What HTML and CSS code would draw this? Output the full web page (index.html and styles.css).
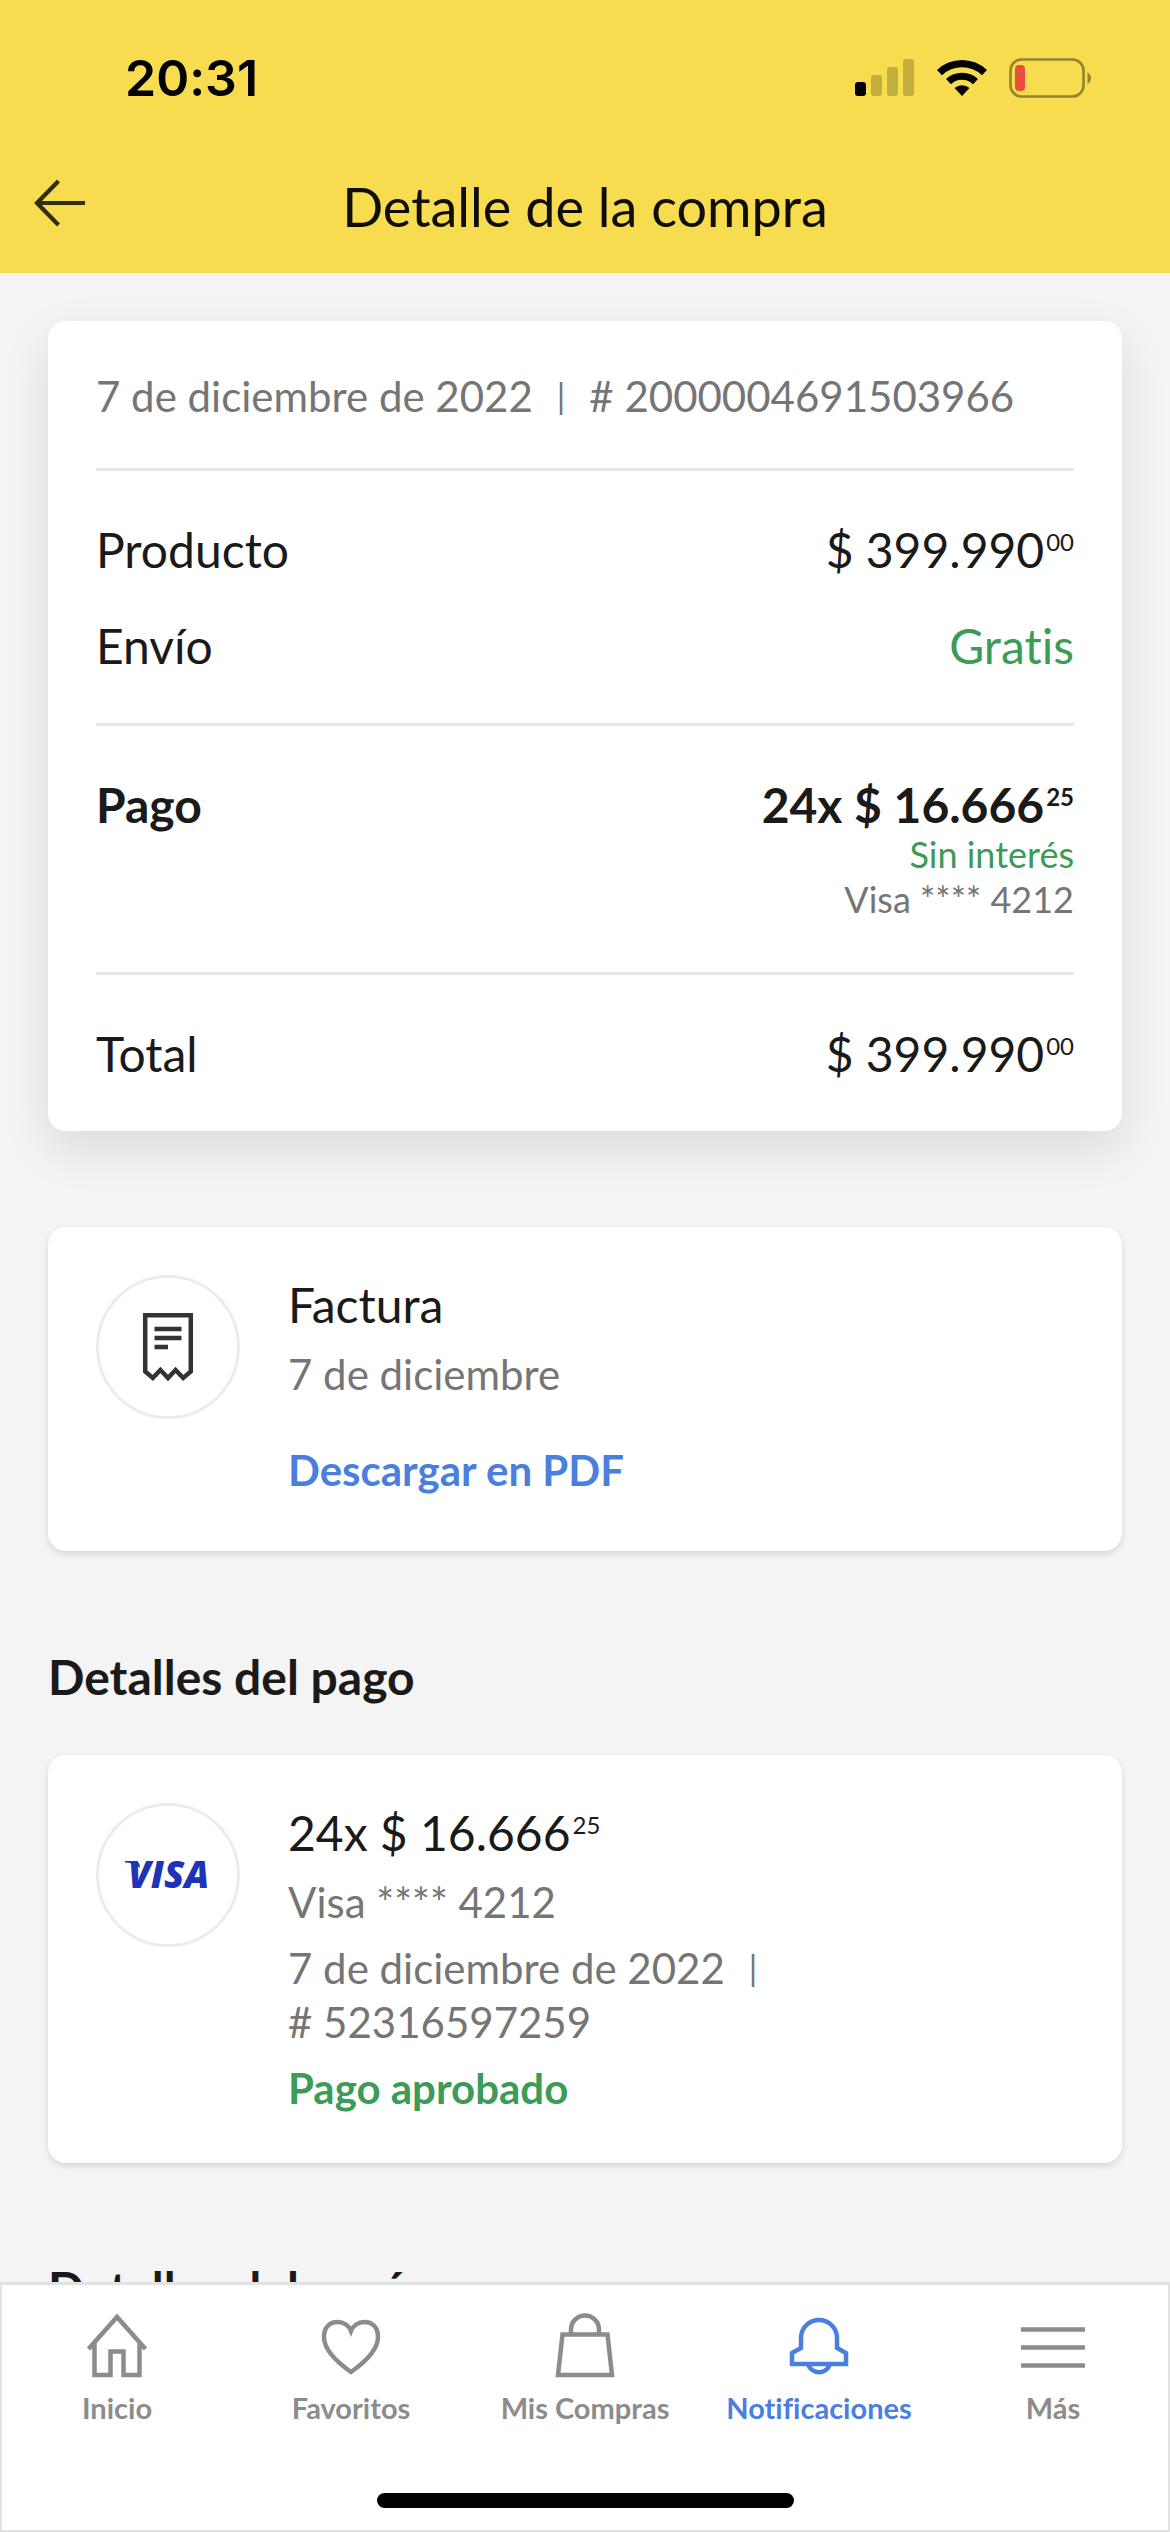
FILE: index.html
```html
<!DOCTYPE html>
<html lang="es">
<head>
<meta charset="utf-8">
<meta name="viewport" content="width=device-width, initial-scale=1">
<title>Detalle de la compra</title>
<link rel="stylesheet" href="styles.css">
</head>
<body>
<header class="header">
  <div class="status">
    <span class="status-time">20:31</span>
    <div class="status-icons">
      <svg class="signal" width="60" height="40" viewBox="0 0 60 40" aria-hidden="true">
        <rect x="0" y="24" width="11" height="14" rx="3"/>
        <g opacity=".2">
          <rect x="16" y="17" width="11" height="21" rx="3"/>
          <rect x="32" y="9" width="11" height="29" rx="3"/>
          <rect x="48" y="1" width="11" height="37" rx="3"/>
        </g>
      </svg>
      <svg class="wifi" width="52" height="40" viewBox="0 0 52 40" aria-hidden="true">
        <path d="M1 12A36 36 0 0 1 51 12L46 17.200A29 29 0 0 0 6 17.200ZM10 21A23.500 23.500 0 0 1 42 21L37 26.200A16 16 0 0 0 15 26.200ZM18.500 30A12 12 0 0 1 33.500 30L26 38Z"/>
      </svg>
      <svg class="battery" width="84" height="40" viewBox="0 0 84 40" aria-hidden="true">
        <rect x="1.500" y="1.500" width="73" height="37" rx="11" fill="none" stroke="#94842f" stroke-width="2.600"/>
        <path d="M78.500 14.500Q82 16.500 82 20T78.500 26Z" fill="#94842f"/>
        <rect x="6" y="7" width="10" height="26" rx="4" fill="#eb4d3d"/>
      </svg>
    </div>
  </div>
  <div class="titlebar">
    <button class="back" type="button" aria-label="Volver">
      <svg width="52" height="48" viewBox="0 0 52 48" fill="none" stroke="#332d10" stroke-width="4.200" aria-hidden="true">
        <path d="M24.500 2 3 24 24.500 46M3 24H51"/>
      </svg>
    </button>
    <h1 class="title">Detalle de la compra</h1>
  </div>
</header>

<main class="content">
  <section class="card summary">
    <p class="order muted">7 de diciembre de 2022<span class="sep">|</span># 2000004691503966</p>
    <dl class="rows">
      <div class="row"><dt>Producto</dt><dd>$ 399.990<sup>00</sup></dd></div>
      <div class="row"><dt>Envío</dt><dd class="green">Gratis</dd></div>
    </dl>
    <dl class="rows">
      <div class="row strong"><dt>Pago</dt><dd>24x $ 16.666<sup>25</sup></dd></div>
    </dl>
    <div class="payment-note">
      <p class="green">Sin interés</p>
      <p class="muted">Visa **** 4212</p>
    </div>
    <dl class="rows">
      <div class="row"><dt>Total</dt><dd>$ 399.990<sup>00</sup></dd></div>
    </dl>
  </section>

  <section class="card detail">
    <div class="badge">
      <svg width="52" height="70" viewBox="0 0 52 70" fill="none" stroke="#333" stroke-width="4.500" aria-hidden="true">
        <path d="M3.200 3.200H48.800V59.500L41.200 66 33.600 58 26 66 18.400 58 10.800 66 3.200 59.500Z"/>
        <path d="M12.500 17H39.500M12.500 26H39.500M12.500 35H26"/>
      </svg>
    </div>
    <div class="detail-body">
      <h2 class="detail-title">Factura</h2>
      <p class="muted">7 de diciembre</p>
      <a class="link" href="#factura">Descargar en PDF</a>
    </div>
  </section>

  <h2 class="section-title">Detalles del pago</h2>
  <section class="card detail">
    <div class="badge">
      <svg width="100" height="56" viewBox="-5 -12 100 56" fill="#1f33b8" role="img" aria-label="Visa">
        <path d="M2 2H13Q17 3 17 9Q10 3.500 2 3.500Z"/>
        <text class="visa" x="5" y="29">VISA</text>
      </svg>
    </div>
    <div class="detail-body">
      <h3 class="detail-title">24x $ 16.666<sup>25</sup></h3>
      <p class="muted">Visa **** 4212</p>
      <p class="muted">7 de diciembre de 2022<span class="sep">|</span><br># 52316597259</p>
      <p class="green approved">Pago aprobado</p>
    </div>
  </section>

  <h2 class="section-title">Detalles del envío</h2>
</main>

<nav class="tabs">
  <div class="tab-list">
    <a class="tab" href="#inicio">
      <svg viewBox="0 0 66 66" aria-hidden="true"><path d="M4.500 37 33 5 61.500 37M10.500 31V63H26.500V39.500H39.500V63H55.500V31"/></svg>
      Inicio
    </a>
    <a class="tab" href="#favoritos">
      <svg viewBox="0 0 66 66" aria-hidden="true"><path d="M33 60C16 48 6 36 6 25C6 15 12 10 19.500 10C26 10 31 14 33 19C35 14 40 10 46.500 10C54 10 60 15 60 25C60 36 50 48 33 60Z"/></svg>
      Favoritos
    </a>
    <a class="tab" href="#compras">
      <svg viewBox="0 0 66 66" aria-hidden="true"><path d="M10.500 22.500H55.500L60 63H6ZM19 22V17.500A14 14 0 0 1 47 17.500V22"/></svg>
      Mis Compras
    </a>
    <a class="tab active" href="#notificaciones">
      <svg viewBox="0 0 66 66" aria-hidden="true"><path d="M15 26A18 18 0 0 1 51 26V36L60 41V52H6V41L15 36ZM22 52A11.500 11.500 0 0 0 44 52"/></svg>
      Notificaciones
    </a>
    <a class="tab" href="#mas">
      <svg viewBox="0 0 66 66" aria-hidden="true"><path d="M1 17.500H65M1 35.500H65M1 53.500H65"/></svg>
      Más
    </a>
  </div>
  <div class="home-indicator"></div>
</nav>
</body>
</html>
```
FILE: styles.css
```css
* {
  box-sizing: border-box;
  margin: 0;
  padding: 0;
}

body {
  height: 100vh;
  display: flex;
  flex-direction: column;
  background: #f4f4f4;
  color: #1a1a1a;
  font-family: Lato, "Liberation Sans", sans-serif;
  font-size: 48px;
  font-variant-ligatures: none;
  line-height: 60px;
}

h1, h2, h3 {
  font-size: inherit;
  font-weight: 400;
}

a {
  text-decoration: none;
}

sup {
  margin-left: 2px;
  font-size: 24px;
  line-height: 0;
  vertical-align: 17px;
}

/* Header */
.header {
  flex: none;
  background: #f6dc4e;
}

.status {
  display: flex;
  align-items: center;
  justify-content: space-between;
  height: 140px;
  padding: 16px 77px 0 125px;
  color: #000;
}

.status-time {
  font-family: Inter, "Liberation Sans", sans-serif;
  font-size: 50px;
  font-weight: 600;
}

.status-icons {
  display: flex;
  gap: 21px;
}

.titlebar {
  display: grid;
  grid-template-columns: 104px 1fr 104px;
  align-items: center;
  height: 133px;
}

.back {
  display: flex;
  padding: 0 0 8px 34px;
  border: 0;
  background: none;
}

.title {
  color: #0f0d05;
  font-size: 54px;
  text-align: center;
}

/* Content */
.content {
  flex: 1;
  min-height: 0;
  overflow-y: auto;
  scrollbar-width: none;
  padding: 48px;
}

.card {
  padding: 48px;
  border-radius: 18px;
  background: #fff;
  box-shadow: 0 3px 6px rgba(0, 0, 0, .12);
}

.summary {
  margin-bottom: 96px;
  padding: 0 48px;
  box-shadow: 0 18px 48px rgba(0, 0, 0, .1);
}

.muted {
  color: #757575;
}

.green {
  color: #3d9b58;
}

.order {
  padding: 48px 0 45px;
  font-size: 42px;
  line-height: 54px;
}

.sep {
  margin: 0 24px;
  font-size: 34px;
  line-height: 0;
  vertical-align: 3px;
}

.rows {
  display: grid;
  gap: 36px;
  padding: 49px 0 47px;
  border-top: 3px solid #e6e6e6;
}

.row {
  display: flex;
  justify-content: space-between;
}

.strong {
  font-weight: 700;
}

.payment-note {
  display: grid;
  gap: 6px;
  margin-top: -47px;
  padding-bottom: 53px;
  font-size: 36px;
  line-height: 39px;
  text-align: right;
}

.detail {
  display: flex;
  gap: 48px;
}

.badge {
  display: flex;
  flex: none;
  align-items: center;
  justify-content: center;
  width: 144px;
  height: 144px;
  border: 3px solid #ededed;
  border-radius: 50%;
}

.visa {
  font-family: "Open Sans", sans-serif;
  font-size: 37px;
  font-style: italic;
  font-weight: 800;
}

.detail-body {
  display: grid;
  flex: 1;
  align-content: start;
  gap: 12px;
  font-size: 42px;
  line-height: 54px;
}

.detail-title {
  font-size: 48px;
  line-height: 60px;
}

.link {
  justify-self: start;
  margin: 30px 0 6px;
  color: #4a7fdf;
  font-weight: 700;
}

.approved {
  font-weight: 700;
}

.section-title {
  margin: 96px 0 48px;
  font-weight: 700;
}

/* Bottom tabs */
.tabs {
  display: flex;
  flex: none;
  flex-direction: column;
  align-items: center;
  border: 2px solid #e2e2e2;
  border-top-width: 3px;
  padding: 27px 0 22px;
  background: #fff;
}

.tab-list {
  display: grid;
  grid-template-columns: repeat(5, 1fr);
  align-self: stretch;
  margin: 0 -2px;
}

.tab {
  display: flex;
  flex-direction: column;
  align-items: center;
  gap: 12px;
  color: #8c8c8c;
  font-size: 29px;
  font-weight: 700;
  line-height: 36px;
}

.tab svg {
  width: 66px;
  height: 66px;
  fill: none;
  stroke: currentColor;
  stroke-width: 4.5px;
}

.tab.active {
  color: #4a7fdf;
}

.home-indicator {
  width: 417px;
  height: 15px;
  margin-top: 67px;
  border-radius: 8px;
  background: #000;
}
```
